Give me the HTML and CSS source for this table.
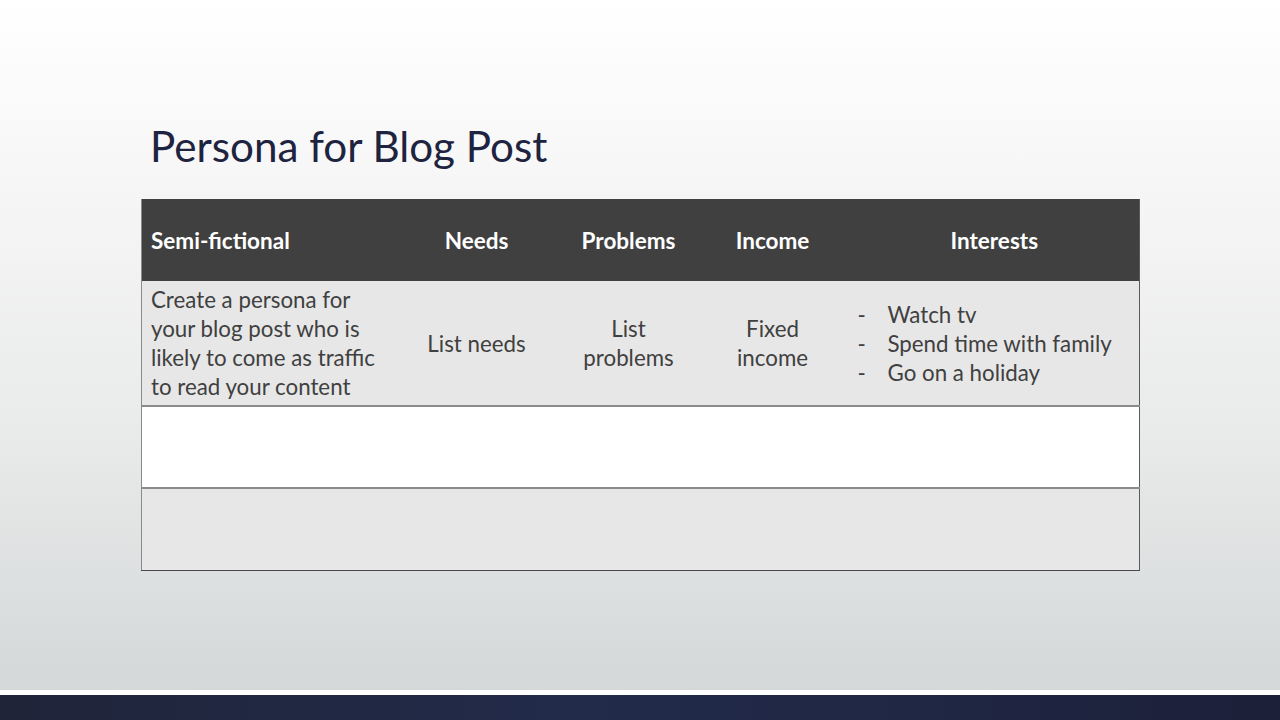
FILE: index.html
```html
<!DOCTYPE html>
<html>
<head>
<meta charset="utf-8">
<link rel="stylesheet" href="styles.css">
</head>
<body>
<div class="slide">
  <h1 class="title">Persona for Blog Post</h1>
  <table class="persona">
    <colgroup>
      <col class="c1"><col class="c2"><col class="c3"><col class="c4"><col class="c5">
    </colgroup>
    <thead>
      <tr class="head">
        <th class="left">Semi-fictional</th>
        <th>Needs</th>
        <th>Problems</th>
        <th>Income</th>
        <th>Interests</th>
      </tr>
    </thead>
    <tbody>
      <tr class="r1">
        <td class="left">Create a persona for your blog post who is likely to come as traffic to read your content</td>
        <td>List needs</td>
        <td>List<br>problems</td>
        <td>Fixed<br>income</td>
        <td class="left">
          <ul class="dash">
            <li>Watch tv</li>
            <li>Spend time with family</li>
            <li>Go on a holiday</li>
          </ul>
        </td>
      </tr>
      <tr class="r2"><td></td><td></td><td></td><td></td><td></td></tr>
      <tr class="r3"><td></td><td></td><td></td><td></td><td></td></tr>
    </tbody>
  </table>
</div>
<div class="gap"></div>
<div class="footer"></div>
</body>
</html>
```

FILE: styles.css
```css
html, body {
  margin: 0;
  padding: 0;
  width: 1280px;
  height: 720px;
  overflow: hidden;
  background: #ffffff;
  font-family: Lato, "Open Sans", sans-serif;
}

.slide {
  height: 690px;
  box-sizing: border-box;
  padding: 117px 0 0 141px;
  background: linear-gradient(to bottom, #ffffff 0%, #f5f5f5 30%, #e8e9e9 65%, #d4d8d9 100%);
}

.title {
  margin: 0 0 24px 9px;
  font-weight: 400;
  font-size: 42.2px;
  line-height: 58px;
  color: #1e2340;
}

.persona {
  border-collapse: collapse;
  table-layout: fixed;
  width: 998px;
  border-left: 1px solid #8a8a8a;
  border-right: 1px solid #5a5a5a;
  border-bottom: 1px solid #4a4a4a;
}

.c1 { width: 250px; }
.c2 { width: 170px; }
.c3 { width: 134px; }
.c4 { width: 154px; }
.c5 { width: 290px; }

.persona th, .persona td {
  padding: 0 8px;
  text-align: center;
  vertical-align: middle;
}

.persona .left { text-align: left; }

.head {
  height: 82px;
  background: #404040;
  color: #ffffff;
  font-size: 22.5px;
  font-weight: 700;
}

.head th.left { padding-left: 9px; }

.r1 {
  height: 125px;
  background: #e7e7e7;
  color: #404040;
  font-size: 22.3px;
  line-height: 29px;
  border-bottom: 2px solid #8a8a8a;
}

.r1 td.left:first-child { padding-left: 9px; padding-right: 4px; }

.r2 {
  height: 82px;
  background: #ffffff;
  border-bottom: 2px solid #8a8a8a;
}

.r3 {
  height: 82px;
  background: #e7e7e7;
}

.dash {
  list-style: none;
  margin: 0;
  padding: 0 0 0 30px;
}

.dash li {
  position: relative;
  white-space: nowrap;
}

.dash li::before {
  content: "-";
  position: absolute;
  left: -30px;
}

.gap { height: 5px; background: #ffffff; }

.footer {
  height: 25px;
  background: linear-gradient(to right, #1f2439 0%, #222b4a 45%, #1f2744 70%, #1d2039 100%);
}
```
